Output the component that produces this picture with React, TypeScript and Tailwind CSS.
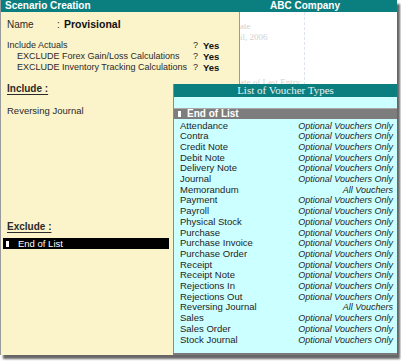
const vouchers: [string, string][] = [
  ['Attendance', 'Optional Vouchers Only'],
  ['Contra', 'Optional Vouchers Only'],
  ['Credit Note', 'Optional Vouchers Only'],
  ['Debit Note', 'Optional Vouchers Only'],
  ['Delivery Note', 'Optional Vouchers Only'],
  ['Journal', 'Optional Vouchers Only'],
  ['Memorandum', 'All Vouchers'],
  ['Payment', 'Optional Vouchers Only'],
  ['Payroll', 'Optional Vouchers Only'],
  ['Physical Stock', 'Optional Vouchers Only'],
  ['Purchase', 'Optional Vouchers Only'],
  ['Purchase Invoice', 'Optional Vouchers Only'],
  ['Purchase Order', 'Optional Vouchers Only'],
  ['Receipt', 'Optional Vouchers Only'],
  ['Receipt Note', 'Optional Vouchers Only'],
  ['Rejections In', 'Optional Vouchers Only'],
  ['Rejections Out', 'Optional Vouchers Only'],
  ['Reversing Journal', 'All Vouchers'],
  ['Sales', 'Optional Vouchers Only'],
  ['Sales Order', 'Optional Vouchers Only'],
  ['Stock Journal', 'Optional Vouchers Only'],
];

const options = [
  { label: 'Include Actuals', indent: false },
  { label: 'EXCLUDE Forex Gain/Loss Calculations', indent: true },
  { label: 'EXCLUDE Inventory Tracking Calculations', indent: true },
];

export default function App() {
  return (
    <div className="w-[401px] h-[361px] bg-white font-['Liberation_Sans',Arial,sans-serif]">
      <div className="relative w-[397px] h-[355px] flex flex-col border-l border-[#9a9a9a] shadow-[3px_4px_2px_rgba(0,0,0,0.6)] overflow-hidden">
        {/* title bar */}
        <div className="h-[12px] flex bg-[#0b7f7f] text-white text-[10px] font-bold leading-[12px]">
          <div className="w-[238px] pl-[4px]">Scenario Creation</div>
          <div className="flex-1 text-center pr-[26px]">ABC Company</div>
        </div>

        <div className="flex-1 flex">
          {/* left cream panel */}
          <div className="w-[238px] bg-[#fbf3ca] text-[#2a2a2a] flex flex-col">
            <div className="flex items-center h-[13px] mt-[6px] pl-[6px] text-[10px]">
              <span className="w-[50px]">Name</span>
              <span className="w-[7px]">:</span>
              <span className="font-bold text-[10.5px] text-[#111]">Provisional</span>
            </div>

            <div className="mt-[9px] flex flex-col text-[9px] leading-[11px]">
              {options.map((o) => (
                <div key={o.label} className="grid grid-cols-[186px_10px_auto] pl-[6px]">
                  <span className={o.indent ? 'pl-[10px]' : ''}>{o.label}</span>
                  <span>?</span>
                  <span className="font-bold text-[9.5px] text-[#111]">Yes</span>
                </div>
              ))}
            </div>

            <div className="mt-[10px] pl-[6px] text-[10px] leading-[12px] font-bold underline underline-offset-2">
              Include :
            </div>
            <div className="mt-[10px] pl-[6px] text-[9.5px] leading-[12px]">Reversing Journal</div>

            <div className="mt-[104px] pl-[6px] text-[10px] leading-[12px] font-bold underline underline-offset-2">
              Exclude :
            </div>
            <div className="mt-[5px] ml-[2px] w-[166px] h-[11px] bg-black text-white text-[9.5px] leading-[11px] flex items-center">
              <span className="w-[3px] h-[6px] bg-white ml-[3px] mr-[9px]" />
              End of List
            </div>
          </div>

          {/* right white panel */}
          <div className="flex-1 bg-white border-l border-[#9a9a9a] relative">
            <div className="flex h-full">
              <div className="w-[65px] border-r border-dashed border-[#dde3ee] pt-[9px] text-[9px] leading-[11px] text-[#d2d2d2] font-['Liberation_Serif',serif] whitespace-nowrap overflow-hidden">
                <div>ate</div>
                <div>il, 2006</div>
                <div className="mt-[34px]">ate of Last Entry</div>
              </div>
              <div className="flex-1" />
            </div>
          </div>
        </div>

        {/* popup list */}
        <div className="absolute left-[172px] top-[84px] right-0 bottom-0 bg-[#ccffff] border-l border-[#8a8a8a] border-b-2 border-b-[#7a7a7a] flex flex-col">
          <div className="h-[13px] bg-[#0b7f7f] text-[#e8f2f2] text-center font-['Liberation_Serif',serif] text-[11px] leading-[13px]">
            List of Voucher Types
          </div>
          <div className="h-[11px]" />
          <div className="h-[11px] bg-[#7d7d7d] border-t border-[#a9a9a9] text-white font-bold text-[10px] leading-[10px] flex items-center">
            <span className="w-[3px] h-[6px] bg-white ml-[4px] mr-[6px]" />
            End of List
          </div>
          <div className="pt-[1.5px] pl-[6px] pr-[4px] text-[9.5px] leading-[10.7px] text-[#1e1e1e]">
            {vouchers.map(([name, kind]) => (
              <div key={name} className="flex justify-between">
                <span>{name}</span>
                <span className="italic text-[9px]">{kind}</span>
              </div>
            ))}
          </div>
        </div>
      </div>
    </div>
  );
}
